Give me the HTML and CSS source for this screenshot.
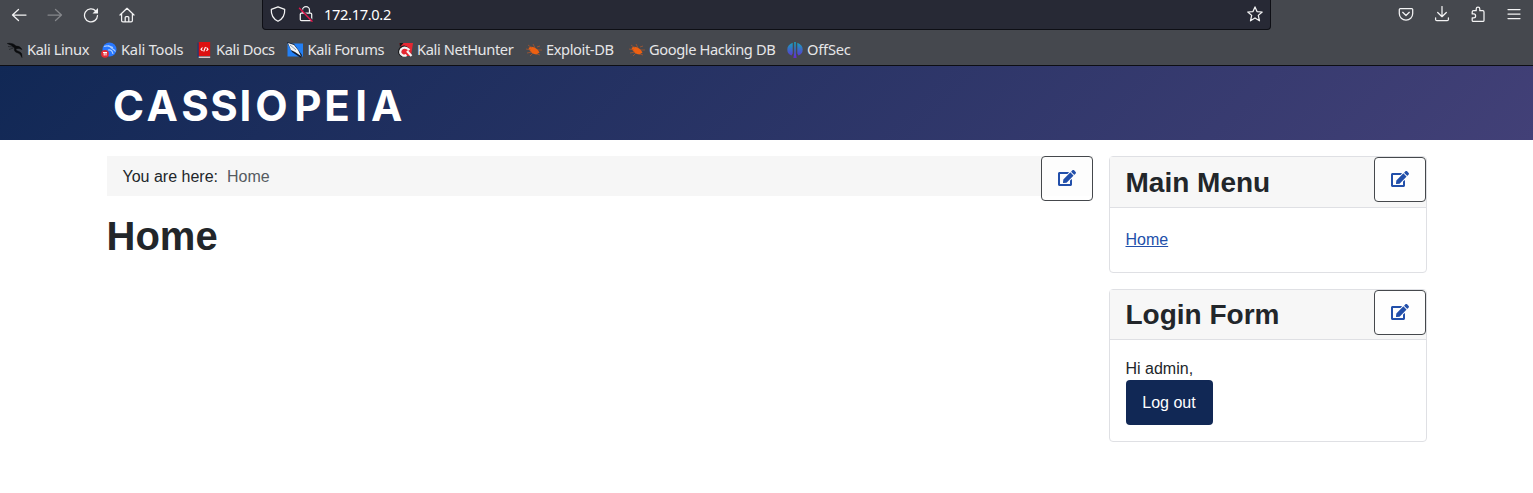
FILE: index.html
```html
<!DOCTYPE html>
<html lang="en">
<head>
<meta charset="utf-8">
<title>Home</title>
<link rel="stylesheet" href="styles.css">
</head>
<body>
<div class="chrome">
  <div class="toolbar">
    <div class="nav">
      <svg class="ico" viewBox="0 0 16 16"><path d="M15 8H1.500M7.500 2.500 1.500 8l6 5.500"/></svg>
      <svg class="ico dim" viewBox="0 0 16 16"><path d="M1 8h13.500M8.500 2.500l6 5.500-6 5.500"/></svg>
      <svg class="ico" viewBox="0 0 16 16"><path d="M12.800 4A6.500 6.500 0 1 0 14.500 8.500"/><path class="solid" d="M15 1v5.500H9.500z"/></svg>
      <svg class="ico" viewBox="0 0 16 16"><path d="M1 8l7-6.700L15 8M2.600 7v6.500q0 1.300 1.300 1.300h8.200q1.300 0 1.300-1.300V7M6.200 14.500v-4q0-1 1-1h1.600q1 0 1 1v4"/></svg>
    </div>
    <div class="urlbar">
      <svg class="ico" viewBox="0 0 16 16"><path d="M8 .8 14.700 3.300c.3 5-1.500 9.500-6.700 12C2.800 12.800 1 8.300 1.300 3.300z"/></svg>
      <svg class="ico" viewBox="0 0 16 16"><path d="M4.500 7V4.200a3.500 3.500 0 0 1 7 0V7M3.500 7h9q1.200 0 1.200 1.200v5.300q0 1.200-1.200 1.200h-9q-1.200 0-1.200-1.200V8.200Q2.300 7 3.500 7z"/><path class="gap" d="M1.500 1.500l13 13"/><path class="slash" d="M1.500 2.200l12.500 13"/></svg>
      <span class="url">172.17.0.2</span>
      <svg class="ico star" viewBox="0 0 16 16"><path d="M8 .9l2 4.700 5.200.4-3.900 3.400 1.200 5.400L8 12l-4.500 2.800 1.200-5.400L.8 6 6 5.600z"/></svg>
    </div>
    <div class="tools">
      <svg class="ico" viewBox="0 0 16 16"><path d="M2.300 2.500h11.400q1 0 1 1v4a6.700 6.700 0 0 1-13.400 0v-4q0-1 1-1zM4.700 6.300 8 9.500l3.300-3.200"/></svg>
      <svg class="ico" viewBox="0 0 16 16"><path d="M8 .5v10M3.700 6.500 8 10.700l4.300-4.200M1.600 11.800v1.700q0 1.200 1.200 1.200h10.400q1.200 0 1.200-1.200v-1.700"/></svg>
      <svg class="ico" viewBox="0 0 16 16"><path d="M2.200 7.500V6q0-1.300 1.300-1.300h2.700V3a1.800 1.800 0 0 1 3.600 0v1.700h3q1.200 0 1.200 1.200v8.600q0 .9-1 .9H3.200q-1 0-1-1v-2.600h1.500a1.900 1.900 0 0 0 0-3.800H2.200z"/></svg>
      <svg class="ico" viewBox="0 0 16 16"><path d="M2 3.500h12M2 8h12M2 12.500h12"/></svg>
    </div>
  </div>
  <div class="bookmarks">
    <div class="bm"><svg viewBox="0 0 16 16"><path d="M.3 1.500Q6 .5 9 4q4-.5 6 3.500L12 6.500q-2.500-.5-3 1 .3 1.500 3 2 3.500 1 3 6-1.500-4-4-4.500Q6.500 10 7.500 6 5 3 .3 1.500zM1 4.500l5 .5M2 7.500 6.500 6" fill="#0b0c0e" stroke="#0b0c0e" stroke-width=".5"/></svg><span>Kali Linux</span></div>
    <div class="bm wide"><svg viewBox="0 0 16 16"><circle cx="8.500" cy="7.500" r="7" fill="#2777ff"/><path d="M3 4.500q5-2 8 2 2 1 3.500 3M7 8q4-1 5 4M7 3.500l5 2" fill="none" stroke="#a9cdff" stroke-width="1.200"/><circle cx="4" cy="11.800" r="3.900" fill="#e22b35"/><path d="M2 10.500h4M3.200 10.500v3M5 10.500v3" stroke="#fff" fill="none"/></svg><span>Kali Tools</span></div>
    <div class="bm"><svg viewBox="0 0 16 16"><path d="M1.500.5h2v15h-2z" fill="#173878"/><path d="M2.700 0h11.500v14H2.700z" fill="#dc1010"/><path d="M2.700 14.500h11.500V16H2.700z" fill="#d9c6c8"/><path d="M6.500 5.500 5 7.200l1.500 1.700M10.500 5.500l1.500 1.700-1.500 1.700M9.500 5 7.700 9.500" fill="none" stroke="#fff" stroke-width="1.100"/></svg><span>Kali Docs</span></div>
    <div class="bm"><svg viewBox="0 0 16 16"><path d="M.5 1.500H16v13H.5z" fill="#2380f5"/><path d="M0 0l7 2 8 11-1 3-9-6z" fill="#111c32"/><path d="M1 1l6 2 4 5 3 6-6-4-4-2z" fill="#f3f5f7"/><path d="M3 3l6 5" stroke="#899aad"/></svg><span>Kali Forums</span></div>
    <div class="bm"><svg viewBox="0 0 16 16"><path d="M2.500 1H16l-2 13H5z" fill="#e52732"/><path d="M2.500 1h4L3 5z" fill="#151515"/><path d="M12 7Q7 2 3.200 6-.5 11 5 14.200" fill="none" stroke="#19191b" stroke-width="1.600"/><path d="M12.500 8Q8 3.800 4.200 7.200 1.500 11.500 6 13.500q2 .5 3.500-.5M10 9l4.500 5" fill="none" stroke="#f4f4f4" stroke-width="2.200"/></svg><span>Kali NetHunter</span></div>
    <div class="bm"><svg viewBox="0 0 16 16"><path d="M2.500 6q4-3 9 1.500l2 3-3 2Q5 12 2.500 6z" fill="#ee6011"/><path d="M0 7l5 1M1 11l5-1M4 14l3-3M2 3l4 3M7 2l2 4M11 5l3-1M12 8h4M11 12l3 1" stroke="#b3572a" fill="none" stroke-width=".7"/></svg><span>Exploit-DB</span></div>
    <div class="bm"><svg viewBox="0 0 16 16"><path d="M2.500 6q4-3 9 1.500l2 3-3 2Q5 12 2.500 6z" fill="#ee6011"/><path d="M0 7l5 1M1 11l5-1M4 14l3-3M2 3l4 3M7 2l2 4M11 5l3-1M12 8h4M11 12l3 1" stroke="#b3572a" fill="none" stroke-width=".7"/></svg><span>Google Hacking DB</span></div>
    <div class="bm wide"><svg viewBox="0 0 16 16"><defs><linearGradient id="og" x2="0" y2="1"><stop stop-color="#14a5bd"/><stop offset="1" stop-color="#6529d0"/></linearGradient></defs><path d="M5.700 .8v10.700L4.500 13.500Q.3 12 .3 7.500T5.700 .8zM10.300 .8v10.700l1.200 2q4.200-1.500 4.200-6T10.300 .8zM7.200 0h1.600v11l.8 5H6.400l.8-5z" fill="url(#og)"/></svg><span>OffSec</span></div>
  </div>
</div>
<header class="header">
  <svg class="brand" viewBox="0 0 304 74" role="img"><text y="55" x="6 39.400 74.300 103.300 132.500 148.300 187.200 217.200 248.200 263.900">CASSIOPEIA</text></svg>
</header>
<main class="site">
  <section class="content">
    <div class="crumbs"><div class="trail"><span>You are here:</span><span class="current">Home</span></div>
      <a class="edit"><svg viewBox="0 0 576 512"><path d="M402.600 83.200l90.200 90.200c3.800 3.800 3.800 10 0 13.800L274.400 405.600l-92.800 10.300c-12.400 1.400-22.900-9.100-21.500-21.500l10.300-92.800L388.800 83.200c3.800-3.800 10-3.800 13.800 0zm162-22.900l-48.800-48.800c-15.200-15.200-39.900-15.200-55.200 0l-35.400 35.400c-3.800 3.800-3.800 10 0 13.800l90.200 90.200c3.800 3.800 10 3.800 13.800 0l35.400-35.400c15.200-15.300 15.200-40 0-55.200zM384 346.200V448H64V128h229.800c3.200 0 6.200-1.300 8.500-3.500l40-40c7.600-7.600 2.200-20.500-8.500-20.500H48C21.500 64 0 85.500 0 112v352c0 26.500 21.500 48 48 48h352c26.500 0 48-21.500 48-48V306.200c0-10.700-12.900-16-20.500-8.500l-40 40c-2.200 2.300-3.500 5.300-3.500 8.500z"/></svg></a></div>
    <h1>Home</h1>
  </section>
  <aside class="side">
    <section class="card">
      <div class="card-head menu-head"><h3>Main Menu</h3>
        <a class="edit"><svg viewBox="0 0 576 512"><path d="M402.600 83.200l90.200 90.200c3.800 3.800 3.800 10 0 13.800L274.400 405.600l-92.800 10.300c-12.400 1.400-22.900-9.100-21.500-21.500l10.300-92.800L388.800 83.200c3.800-3.800 10-3.800 13.800 0zm162-22.900l-48.800-48.800c-15.200-15.200-39.900-15.200-55.200 0l-35.400 35.400c-3.800 3.800-3.800 10 0 13.800l90.200 90.200c3.800 3.800 10 3.800 13.800 0l35.400-35.400c15.200-15.300 15.200-40 0-55.200zM384 346.200V448H64V128h229.800c3.200 0 6.200-1.300 8.500-3.500l40-40c7.600-7.600 2.200-20.500-8.500-20.500H48C21.500 64 0 85.500 0 112v352c0 26.500 21.500 48 48 48h352c26.500 0 48-21.500 48-48V306.200c0-10.700-12.900-16-20.500-8.500l-40 40c-2.200 2.300-3.500 5.300-3.500 8.500z"/></svg></a></div>
      <div class="card-body menu"><a href="#">Home</a></div>
    </section>
    <section class="card">
      <div class="card-head"><h3>Login Form</h3>
        <a class="edit"><svg viewBox="0 0 576 512"><path d="M402.600 83.200l90.200 90.200c3.800 3.800 3.800 10 0 13.800L274.400 405.600l-92.800 10.300c-12.400 1.400-22.900-9.100-21.500-21.500l10.300-92.800L388.800 83.200c3.800-3.800 10-3.800 13.800 0zm162-22.900l-48.800-48.800c-15.200-15.200-39.900-15.200-55.200 0l-35.400 35.400c-3.800 3.800-3.800 10 0 13.800l90.200 90.200c3.800 3.800 10 3.800 13.800 0l35.400-35.400c15.200-15.300 15.200-40 0-55.200zM384 346.200V448H64V128h229.800c3.200 0 6.200-1.300 8.500-3.500l40-40c7.600-7.600 2.200-20.500-8.500-20.500H48C21.500 64 0 85.500 0 112v352c0 26.500 21.500 48 48 48h352c26.500 0 48-21.500 48-48V306.200c0-10.700-12.900-16-20.500-8.500l-40 40c-2.200 2.300-3.500 5.300-3.500 8.500z"/></svg></a></div>
      <div class="card-body login"><div>Hi admin,</div><button class="logout">Log out</button></div>
    </section>
  </aside>
</main>
</body>
</html>
```
FILE: styles.css
```css
* { box-sizing: border-box; }
body { margin: 0; background: #fff; color: #22262a; font: 16px/24px "Liberation Sans", Arial, sans-serif; overflow: hidden; }
.chrome { height: 66px; background: #45484e; border-bottom: 1px solid #0d0e14; color: #e6e6e8; font-family: "Noto Sans", sans-serif; }
.toolbar { display: flex; height: 34px; align-items: flex-start; }
.ico { width: 16px; height: 16px; flex: none; fill: none; stroke: #f3f3f4; stroke-width: 1.25; stroke-linecap: round; stroke-linejoin: round; }
.ico .solid { fill: #f3f3f4; stroke: none; }
.ico .gap { stroke: #272935; stroke-width: 1.4; }
.ico .slash { stroke: #e5174d; stroke-width: 1.4; }
.ico.dim { stroke: #85878b; }
.nav { width: 262px; padding: 7px 0 0 11px; display: flex; gap: 20px; }
.urlbar { width: 1009px; height: 30px; display: flex; align-items: flex-start; padding: 6px 7px 0; background: #272935; border: 1px solid #0e0f15; border-top: 0; border-radius: 0 0 4px 4px; }
.urlbar .ico + .ico { margin-left: 12px; }
.url { font-size: 14.67px; line-height: 16px; margin-left: 10px; color: #fff; letter-spacing: -.35px; }
.star { margin-left: auto; }
.tools { margin-left: 127px; padding-top: 6px; display: flex; gap: 20px; }
.bookmarks { display: grid; grid-template-columns: 94px 95px 91.500px 109.500px 129px 103px 158px 80px; padding-left: 6.500px; height: 31px; align-items: center; font-size: 14.67px; line-height: 20px; }
.bm { display: flex; align-items: center; gap: 4.500px; white-space: nowrap; letter-spacing: -.4px; }
.bm.wide { letter-spacing: -.2px; }
.bm span { margin-top: -2px; }
.bm svg { width: 16px; height: 16px; flex: none; }
.header { height: 74px; padding-left: 107px; background: linear-gradient(135deg, #112855, #424077); }
.brand { width: 304px; height: 74px; display: block; }
.brand text { font: 700 42px Inter, sans-serif; fill: #fff; }
.site { width: 1320px; margin: 16px auto 0; display: grid; grid-template-columns: 986px 318px; gap: 16px; }
.crumbs { display: flex; height: 40px; background: #f6f6f6; }
.trail { flex: 1; padding: 9px 16px 0; display: flex; gap: 9px; }
.current { color: #555b61; }
.edit { width: 52px; height: 45px; flex: none; display: flex; justify-content: center; align-items: center; padding-bottom: 1px; background: rgba(255,255,255,.8); border: 1px solid #45484c; border-radius: 4px; }
.edit svg { width: 18px; height: 16px; fill: #224faa; }
h1 { margin: 16px 0 0; font-size: 40px; line-height: 48px; }
.side { display: flex; flex-direction: column; gap: 16px; }
.card { border: 1px solid #dfe0e4; border-radius: 4px; }
.card-head { display: flex; justify-content: space-between; height: 50px; background: #f7f7f7; border-bottom: 1px solid #dfe0e4; }
.menu-head { height: 51px; }
h3 { margin: 8px 0 0 16px; font-size: 28px; line-height: 34px; }
.menu-head h3 { margin-top: 9px; }
.card-body { padding: 16px; }
.menu { height: 64px; padding-top: 20px; }
.menu a { color: #224faa; text-decoration: underline; }
.login { height: 101px; }
.login div { height: 24px; padding-top: 1px; }
.logout { display: block; width: 87px; height: 45px; border: 0; border-radius: 4px; background: #112855; color: #fff; font: inherit; }
```
